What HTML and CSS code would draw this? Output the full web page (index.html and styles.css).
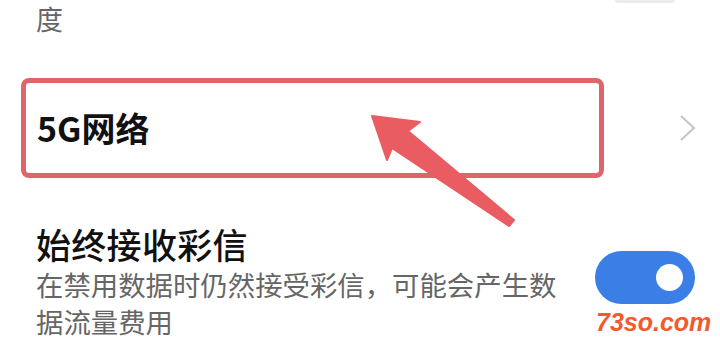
FILE: index.html
```html
<!DOCTYPE html>
<html lang="zh-CN">
<head>
    <meta charset="UTF-8">
    <meta name="viewport" content="width=device-width, initial-scale=1.0">
    <title>移动网络设置</title>
    <link rel="stylesheet" href="styles.css">
</head>
<body>
    <div class="page">
        <div class="row row-top">
            <p class="desc">度</p>
            <span class="toggle-peek"></span>
        </div>

        <div class="row row-link">
            <div class="highlight">
                <span class="title-5g">5G网络</span>
            </div>
            <svg class="chevron" width="18" height="28" viewBox="0 0 18 28">
                <polyline points="2,2 15,14 2,26" fill="none" stroke="#c4c4c4" stroke-width="2"/>
            </svg>
        </div>

        <div class="row row-switch">
            <div class="text">
                <h2 class="title">始终接收彩信</h2>
                <p class="desc desc-long">在禁用数据时仍然接受彩信，可能会产生数据流量费用</p>
            </div>
            <span class="toggle on"><span class="knob"></span></span>
        </div>

        <!-- annotation arrow -->
        <svg class="arrow" width="720" height="338" viewBox="0 0 720 338">
            <polygon points="372,116 420,122 408,131 514,220 509,226 392,148 387,160"
                     fill="#e95c62" stroke="#e95c62" stroke-width="2" stroke-linejoin="round"/>
        </svg>

        <span class="watermark">73so.com</span>
    </div>
</body>
</html>
```

FILE: styles.css
```css
body {
    margin: 0;
    background-color: #fff;
    font-family: "Noto Sans CJK SC", "Noto Sans", sans-serif;
    color: #111;
}
.page {
    position: relative;
    width: 720px;
    height: 338px;
    overflow: hidden;
}
.row {
    display: flex;
    align-items: center;
    justify-content: space-between;
}
.desc {
    margin: 0;
    font-size: 27px;
    line-height: 38px;
    color: #666;
}
.row-top {
    align-items: flex-start;
    height: 78px;
    padding: 0 45px 0 36px;
}
.toggle-peek {
    width: 60px;
    height: 3px;
    background-color: #ebebeb;
    border-radius: 0 0 20px 20px;
}
.row-link {
    padding: 0 23px 0 21px;
}
.highlight {
    display: flex;
    align-items: center;
    box-sizing: border-box;
    width: 583px;
    height: 100px;
    padding-left: 11px;
    border: 5px solid #e0656b;
    border-radius: 8px;
}
.title-5g {
    font-size: 34px;
    font-weight: 700;
    line-height: 40px;
}
.row-switch {
    padding: 44px 25px 0 36px;
}
.title {
    margin: 0;
    font-size: 35px;
    font-weight: 500;
    line-height: 44px;
    letter-spacing: 0.3px;
}
.desc-long {
    width: 530px;
    font-size: 27.4px;
    line-height: 37px;
}
.toggle {
    display: flex;
    align-items: center;
    justify-content: flex-end;
    box-sizing: border-box;
    width: 100px;
    height: 53px;
    padding-right: 12px;
    border-radius: 27px;
    margin-top: -8px;
}
.toggle.on {
    background-color: #3a7ee6;
}
.knob {
    width: 27px;
    height: 27px;
    border-radius: 50%;
    background-color: #fff;
}
.arrow {
    position: absolute;
    top: 0;
    left: 0;
    pointer-events: none;
}
.watermark {
    position: absolute;
    top: 310px;
    left: 596px;
    font-family: "Liberation Sans", Arial, sans-serif;
    font-size: 25px;
    font-weight: 700;
    font-style: italic;
    line-height: 25px;
    color: #f25a2c;
}
```
